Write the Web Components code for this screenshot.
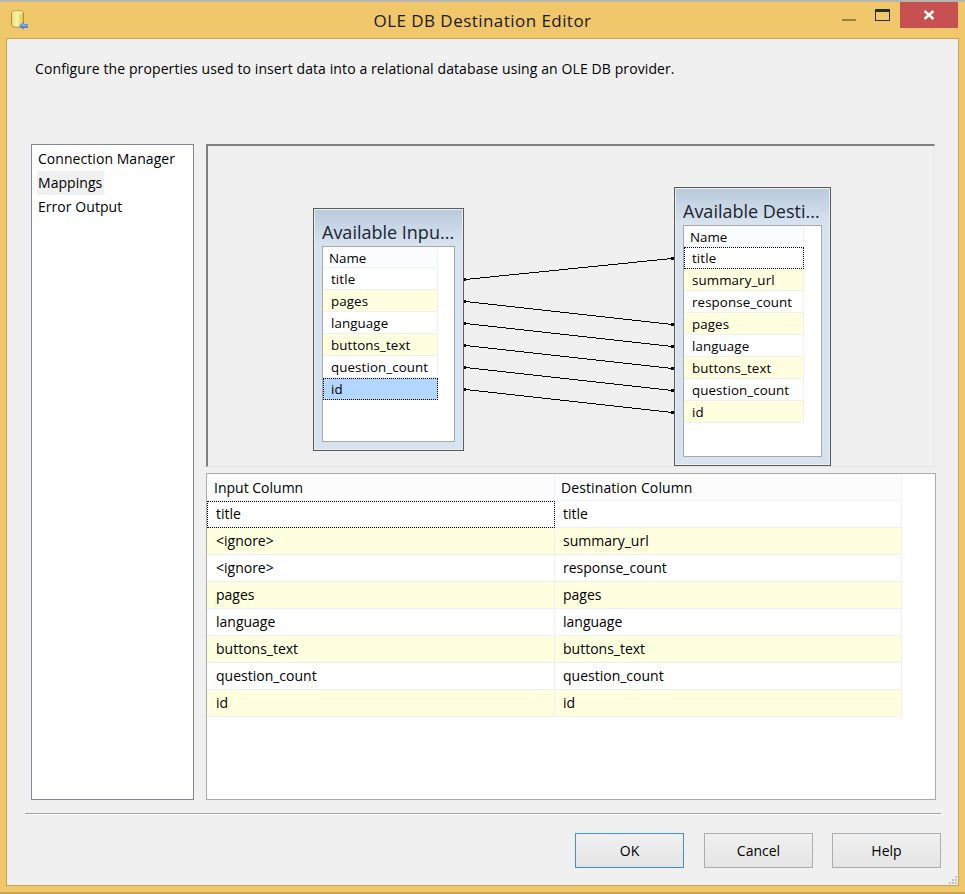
<!DOCTYPE html>
<html>
<head>
<meta charset="utf-8">
<title>OLE DB Destination Editor</title>
<style>
  html, body { margin: 0; padding: 0; background: #f0c76a; }
  body { font-family: "Open Sans", "Liberation Sans", sans-serif; color: #000; }
</style>
</head>
<body>
<editor-window heading="OLE DB Destination Editor">
  <span slot="description">Configure the properties used to insert data into a relational database using an OLE DB provider.</span>
  <page-list slot="nav" items="Connection Manager|Mappings|Error Output" active="Mappings"></page-list>
  <mapping-diagram slot="diagram"></mapping-diagram>
  <mapping-grid slot="grid"></mapping-grid>
  <dialog-button slot="buttons" default>OK</dialog-button>
  <dialog-button slot="buttons">Cancel</dialog-button>
  <dialog-button slot="buttons">Help</dialog-button>
</editor-window>

<script>
// Column data used by both the diagram and the grid
const INPUT_COLUMNS = ["title", "pages", "language", "buttons_text", "question_count", "id"];
const DEST_COLUMNS = ["title", "summary_url", "response_count", "pages", "language", "buttons_text", "question_count", "id"];
const GRID_ROWS = [
  ["title", "title"],
  ["<ignore>", "summary_url"],
  ["<ignore>", "response_count"],
  ["pages", "pages"],
  ["language", "language"],
  ["buttons_text", "buttons_text"],
  ["question_count", "question_count"],
  ["id", "id"],
];

function esc(text) {
  return text.replace(/&/g, "&amp;").replace(/</g, "&lt;").replace(/>/g, "&gt;");
}

// Window frame: title bar, client area
class EditorWindow extends HTMLElement {
  constructor() {
    super();
    this.attachShadow({ mode: "open" });
  }

  connectedCallback() {
    const heading = this.getAttribute("heading") || "";
    this.shadowRoot.innerHTML = `
      <style>
        :host {
          display: flex;
          flex-direction: column;
          width: 965px;
          height: 894px;
          box-sizing: border-box;
          background: #f0c76a;
          border-top: 2px solid #b9b5ab;
          border-bottom: 2px solid #c9a552;
          position: relative;
          overflow: hidden;
        }
        .titlebar {
          height: 36px;
          flex: none;
          display: flex;
          align-items: flex-start;
          position: relative;
        }
        .app-icon {
          margin: 8px 0 0 10px;
          width: 19px;
          height: 21px;
          flex: none;
        }
        .heading {
          flex: 1;
          text-align: center;
          font-size: 17px;
          line-height: 38px;
          margin-left: -29px;
          color: #1a1a1a;
          letter-spacing: 0.45px;
        }
        .controls {
          position: absolute;
          top: 0;
          right: 7px;
          display: flex;
          height: 26px;
        }
        .control {
          display: flex;
          align-items: center;
          justify-content: center;
        }
        .min { width: 14px; margin-right: 19px; }
        .max { width: 15px; margin-right: 10px; }
        .close { width: 58px; background: #c75050; }
        .client {
          flex: 1;
          margin: 0 6px 6px 6px;
          box-sizing: border-box;
          border: 1px solid #c9a552;
          background: #f0f0f0;
          display: flex;
          flex-direction: column;
          padding: 0 17px 0 18px;
          position: relative;
        }
        .description {
          height: 105px;
          flex: none;
          padding: 19px 0 0 10px;
          box-sizing: border-box;
          font-size: 14px;
          letter-spacing: 0.1px;
          line-height: 22px;
          white-space: nowrap;
        }
        .body {
          flex: none;
          display: grid;
          grid-template-columns: 163px 730px;
          column-gap: 12px;
          margin-left: 6px;
          height: 656px;
        }
        .right {
          display: flex;
          flex-direction: column;
          gap: 6px;
        }
        .separator {
          flex: none;
          margin-top: 13px;
          border-top: 1px solid #a0a0a0;
          border-bottom: 1px solid #fff;
        }
        .buttons {
          flex: none;
          display: flex;
          justify-content: flex-end;
          gap: 19px;
          margin-top: 18px;
        }
        .grip {
          position: absolute;
          right: 0;
          bottom: 0;
          width: 10px;
          height: 10px;
        }
      </style>
      <div class="titlebar">
        <svg class="app-icon" viewBox="0 0 19 21">
          <defs>
            <linearGradient id="can" x1="0" x2="1" y1="0" y2="0">
              <stop offset="0" stop-color="#ecd86c"/>
              <stop offset="0.45" stop-color="#fdf6a8"/>
              <stop offset="1" stop-color="#dcc050"/>
            </linearGradient>
          </defs>
          <path d="M1.5 2.5 C1.5 0.2 13.5 0.2 13.5 2.5 V15.5 C13.5 18 1.5 18 1.5 15.5 Z" fill="url(#can)" stroke="#a99048"/>
          <ellipse cx="7.5" cy="2.6" rx="5.5" ry="1.6" fill="#f7eea0"/>
          <path d="M9 16 L13.5 12 V14 H18 V18 H13.5 V20 Z" fill="#4f86d8"/>
          <path d="M10.5 15.8 L13.5 13.4 V14.8 H17.5 V15.8 Z" fill="#9cc0f0"/>
        </svg>
        <div class="heading">${heading}</div>
        <div class="controls">
          <div class="control min">
            <svg width="14" height="2" style="margin-top:10px"><rect width="14" height="2" fill="#9a7f45"/></svg>
          </div>
          <div class="control max">
            <svg width="15" height="12"><rect x="0.5" y="0.5" width="14" height="11" fill="none" stroke="#2b2b2b"/><rect width="15" height="3" fill="#2b2b2b"/></svg>
          </div>
          <div class="control close">
            <svg width="12" height="10" viewBox="0 0 12 10" style="margin-top:-1px"><path d="M1.5 1 L10.5 9 M10.5 1 L1.5 9" stroke="#fff" stroke-width="2.4" fill="none"/></svg>
          </div>
        </div>
      </div>
      <div class="client">
        <div class="description"><slot name="description"></slot></div>
        <div class="body">
          <slot name="nav"></slot>
          <div class="right">
            <slot name="diagram"></slot>
            <slot name="grid"></slot>
          </div>
        </div>
        <div class="separator"></div>
        <div class="buttons"><slot name="buttons"></slot></div>
        <svg class="grip" viewBox="0 0 10 10">
          <path d="M7 1h2v2H7zM4 4h2v2H4zM7 4h2v2H7zM1 7h2v2H1zM4 7h2v2H4zM7 7h2v2H7z" fill="#c4c4c4"/>
        </svg>
      </div>
    `;
  }
}

// Left navigation list
class PageList extends HTMLElement {
  constructor() {
    super();
    this.attachShadow({ mode: "open" });
  }

  connectedCallback() {
    const items = (this.getAttribute("items") || "").split("|");
    const active = this.getAttribute("active");
    this.shadowRoot.innerHTML = `
      <style>
        :host {
          display: block;
          box-sizing: border-box;
          height: 656px;
          background: #fff;
          border: 1px solid #828790;
          padding: 2px 0 0 5px;
          font-size: 14px;
          letter-spacing: 0.05px;
        }
        .item {
          display: table;
          height: 24px;
          line-height: 24px;
          padding: 0 2px 0 1px;
        }
        .item.active { background: #f0f0f0; }
      </style>
      ${items
        .map((item) => `<div class="item ${item === active ? "active" : ""}">${item}</div>`)
        .join("")}
    `;
  }
}

// One table box in the diagram
class TableNode extends HTMLElement {
  constructor() {
    super();
    this.attachShadow({ mode: "open" });
  }

  connectedCallback() {
    const rows = (this.getAttribute("rows") || "").split("|");
    const selected = this.getAttribute("selected");
    const focused = this.getAttribute("focused");
    this.shadowRoot.innerHTML = `
      <style>
        :host {
          display: flex;
          flex-direction: column;
          box-sizing: border-box;
          position: absolute;
          left: var(--x);
          top: var(--y);
          width: var(--w);
          height: var(--h);
          border: 1px solid #5a5a5a;
          box-shadow: inset 0 0 0 1px #eaf0f7;
          background: linear-gradient(#b9cadb 0, #d8e3f0 36px, #d8e3f0 100%);
          padding: 0 8px 8px 8px;
        }
        .name {
          flex: none;
          height: 37px;
          box-sizing: border-box;
          padding: 11px 0 0 0;
          font-size: 18px;
          line-height: 24px;
          color: #1a2530;
          white-space: nowrap;
          overflow: hidden;
        }
        .list {
          flex: 1;
          background: #fff;
          border: 1px solid #a9a9a9;
        }
        .head {
          width: var(--row-w);
          height: 21px;
          box-sizing: border-box;
          line-height: 23px;
          padding-left: 6px;
          font-size: 13.33px;
          background: #fbfcfe;
          border-right: 1px solid #eef2fa;
          border-bottom: 1px solid #eef2fa;
        }
        .row {
          width: var(--row-w);
          height: 22px;
          box-sizing: border-box;
          line-height: 23px;
          padding-left: 8px;
          font-size: 13.33px;
          letter-spacing: 0.1px;
          border-bottom: 1px solid #f0f0f0;
          border-right: 1px solid #f0f0f0;
          white-space: nowrap;
        }
        .row:nth-child(odd) { background: #ffffe0; }
        .row.selected { background: #b3d7ff; outline: 1px dotted #000; outline-offset: -1px; border-color: transparent; }
        .row.focused { background: #fff; outline: 1px dotted #000; outline-offset: -1px; border-color: transparent; }
      </style>
      <div class="name">${this.getAttribute("name")}</div>
      <div class="list">
        <div class="head">Name</div>
        ${rows
          .map((row) => {
            const cls = row === selected ? "selected" : row === focused ? "focused" : "";
            return `<div class="row ${cls}">${row}</div>`;
          })
          .join("")}
      </div>
    `;
  }
}

// Diagram canvas: two table boxes and the lines between them
class MappingDiagram extends HTMLElement {
  constructor() {
    super();
    this.attachShadow({ mode: "open" });
  }

  connectedCallback() {
    const links = [
      [279, 258],
      [301, 324],
      [323, 346],
      [345, 368],
      [367, 390],
      [389, 412],
    ];
    // coordinates in the svg are page coordinates, see the viewBox
    const lines = links
      .map(([from, to]) => {
        const start = `<rect x="464" y="${from - 1}" width="2" height="3"/>`;
        const line = `<path d="M465 ${from}.5 L672 ${to}.5" fill="none" stroke="#000"/>`;
        const head = `<rect x="671" y="${to - 1}" width="3" height="3"/>`;
        return start + line + head;
      })
      .join("");

    this.shadowRoot.innerHTML = `
      <style>
        :host {
          display: block;
          position: relative;
          box-sizing: border-box;
          height: 323px;
          margin-right: 1px;
          background: #f0f0f0;
          border-style: solid;
          border-width: 2px 1px 1px 2px;
          border-color: #808080 #e3e3e3 #e3e3e3 #808080;
        }
        svg {
          position: absolute;
          left: 0;
          top: 0;
          width: 726px;
          height: 320px;
        }
      </style>
      <svg viewBox="208 146 726 320" shape-rendering="crispEdges">${lines}</svg>
      <table-node name="Available Inpu..." rows="${INPUT_COLUMNS.join("|")}" selected="id"
        style="--x:105px;--y:62px;--w:151px;--h:243px;--row-w:115px"></table-node>
      <table-node name="Available Desti..." rows="${DEST_COLUMNS.join("|")}" focused="title"
        style="--x:466px;--y:41px;--w:157px;--h:279px;--row-w:120px"></table-node>
    `;
  }
}

// Input / destination column grid
class MappingGrid extends HTMLElement {
  constructor() {
    super();
    this.attachShadow({ mode: "open" });
  }

  connectedCallback() {
    this.shadowRoot.innerHTML = `
      <style>
        :host {
          display: block;
          box-sizing: border-box;
          height: 327px;
          background: #fff;
          border: 1px solid #ababab;
          font-size: 14px;
        }
        .grid {
          display: grid;
          grid-template-columns: 348px 347px;
          grid-auto-rows: 27px;
        }
        .cell {
          box-sizing: border-box;
          line-height: 26px;
          padding-left: 9px;
          border-right: 1px solid #f0f0f0;
          border-bottom: 1px solid #f0f0f0;
          white-space: nowrap;
        }
        .cell:nth-child(even) { padding-left: 8px; }
        .cell.head {
          background: #fcfcfc;
          padding-left: 7px;
          line-height: 28px;
          border-color: #eef2fa;
        }
        .cell.head:nth-child(even) { padding-left: 6px; letter-spacing: 0.1px; }
        .cell.alt { background: #ffffe0; }
        .cell.focus {
          outline: 1px dotted #000;
          outline-offset: -1px;
        }
      </style>
      <div class="grid">
        <div class="cell head">Input Column</div>
        <div class="cell head">Destination Column</div>
        ${GRID_ROWS.map(
          ([input, dest], i) => `
          <div class="cell ${i % 2 ? "alt" : ""} ${i === 0 ? "focus" : ""}">${esc(input)}</div>
          <div class="cell ${i % 2 ? "alt" : ""}">${esc(dest)}</div>`
        ).join("")}
      </div>
    `;
  }
}

// Dialog push button
class DialogButton extends HTMLElement {
  constructor() {
    super();
    this.attachShadow({ mode: "open" });
  }

  connectedCallback() {
    const isDefault = this.hasAttribute("default");
    this.shadowRoot.innerHTML = `
      <style>
        :host {
          display: inline-block;
          box-sizing: border-box;
          width: 109px;
          height: 35px;
          margin-right: ${isDefault ? 1 : 0}px;
          border: 1px solid ${isDefault ? "#3e8fe0" : "#acacac"};
          background: linear-gradient(#f0f0f0, #e5e5e5);
          text-align: center;
          font-size: 14px;
          line-height: 33px;
        }
      </style>
      <slot></slot>
    `;
  }
}

// Register Custom Elements
customElements.define("editor-window", EditorWindow);
customElements.define("page-list", PageList);
customElements.define("table-node", TableNode);
customElements.define("mapping-diagram", MappingDiagram);
customElements.define("mapping-grid", MappingGrid);
customElements.define("dialog-button", DialogButton);
</script>
</body>
</html>
